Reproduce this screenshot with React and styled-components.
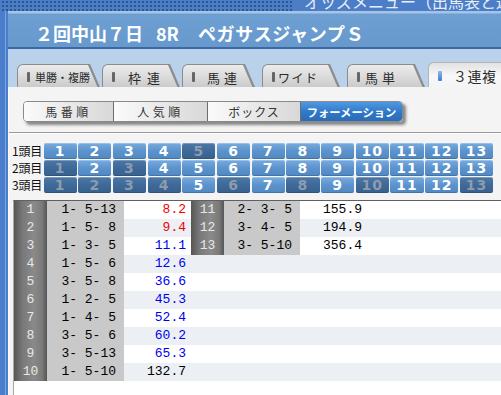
import React from "react";
import styled, { createGlobalStyle } from "styled-components";

const GlobalStyle = createGlobalStyle`
  html, body {
    margin: 0;
    padding: 0;
    background: #fff;
  }
  body {
    width: 501px;
    height: 395px;
    overflow: hidden;
    font-family: "Noto Sans CJK JP", "Noto Sans", sans-serif;
  }
`;

const tabs = [
  { label: "単勝・複勝", w: 83, gap: 0, indent: 5, size: 11, spacing: 0 },
  { label: "枠連", w: 78, gap: 2, indent: 13, size: 13, spacing: 6 },
  { label: "馬連", w: 73, gap: 2, indent: 12, size: 13, spacing: 4 },
  { label: "ワイド", w: 78, gap: 7, indent: 3, size: 12, spacing: 1.5 },
  { label: "馬単", w: 78, gap: 7, indent: 5, size: 13, spacing: 4 },
  { label: "３連複", w: 85, gap: 3, indent: 11, size: 14, spacing: 0.5, active: true },
];

const sorts = [
  { label: "馬番順", w: 89, spacing: 3.5 },
  { label: "人気順", w: 93, spacing: 3.5 },
  { label: "ボックス", w: 92, spacing: 1 },
  { label: "フォーメーション", w: 101, spacing: 0, active: true },
];

const picks = [
  [1, 2, 3, 4, 6, 7, 8, 9, 10, 11, 12, 13],
  [2, 4, 5, 6, 7, 8, 9, 10, 11, 12, 13],
  [5, 7, 9, 11, 12],
];

const odds = [
  ["1", "1- 5-13", "8.2", "red"],
  ["2", "1- 5- 8", "9.4", "red"],
  ["3", "1- 3- 5", "11.1", "blue"],
  ["4", "1- 5- 6", "12.6", "blue"],
  ["5", "3- 5- 8", "36.6", "blue"],
  ["6", "1- 2- 5", "45.3", "blue"],
  ["7", "1- 4- 5", "52.4", "blue"],
  ["8", "3- 5- 6", "60.2", "blue"],
  ["9", "3- 5-13", "65.3", "blue"],
  ["10", "1- 5-10", "132.7", "black"],
  ["11", "2- 3- 5", "155.9", "black"],
  ["12", "3- 4- 5", "194.9", "black"],
  ["13", "3- 5-10", "356.4", "black"],
];

const oddsColors = { red: "#f00000", blue: "#0000f0", black: "#000" };

const App = () => {
  return (
    <Page>
      <GlobalStyle />
      <TopBar>
        <Dots />
        <MenuTitle>オッズメニュー（出馬表と連動）</MenuTitle>
      </TopBar>
      <Body>
        <Strip />
        <Main>
          <HeaderBar>
            <RaceTitle>
              <TitlePart>２回中山７日</TitlePart>
              <TitlePart $gap={13}>8R</TitlePart>
              <TitlePart $gap={19} $spacing={0.7}>
                ペガサスジャンプＳ
              </TitlePart>
            </RaceTitle>
          </HeaderBar>
          <TabRow>
            {tabs.map((t) => (
              <TabShape key={t.label} $w={t.w} $gap={t.gap} $active={t.active}>
                <TabFace $active={t.active}>
                  <TabMark $active={t.active} />
                  <TabLabel $indent={t.indent} $size={t.size} $spacing={t.spacing}>
                    {t.label}
                  </TabLabel>
                </TabFace>
              </TabShape>
            ))}
          </TabRow>
          <Content>
            <SortGroup>
              {sorts.map((s) => (
                <SortButton key={s.label} $w={s.w} $active={s.active} $spacing={s.spacing}>
                  {s.label}
                </SortButton>
              ))}
            </SortGroup>
            <Rule />
            <PickGrid>
              {picks.map((row, i) => (
                <PickRow key={i}>
                  <PickLabel>{i + 1}頭目</PickLabel>
                  {Array.from({ length: 13 }, (_, n) => (
                    <PickCell key={n} $on={row.includes(n + 1)}>
                      {n + 1}
                    </PickCell>
                  ))}
                </PickRow>
              ))}
            </PickGrid>
            <TableWrap>
              {odds.slice(0, 10).map((left, i) => {
                const right = odds[i + 10];
                return (
                  <TableRow key={left[0]} $alt={i % 2 === 1}>
                    <NumCell $w={33}>{left[0]}</NumCell>
                    <ComboCell $w={77}>{left[1]}</ComboCell>
                    <OddsCell $color={oddsColors[left[3]]}>{left[2]}</OddsCell>
                    {right && (
                      <>
                        <NumCell $w={33}>{right[0]}</NumCell>
                        <ComboCell $w={76}>{right[1]}</ComboCell>
                        <OddsCell $color={oddsColors[right[3]]}>{right[2]}</OddsCell>
                      </>
                    )}
                  </TableRow>
                );
              })}
            </TableWrap>
          </Content>
        </Main>
      </Body>
    </Page>
  );
};

const Page = styled.div`
  width: 501px;
  height: 395px;
  display: flex;
  flex-direction: column;
  overflow: hidden;
`;

const TopBar = styled.div`
  flex: none;
  height: 11px;
  display: flex;
  background: #4b7ec6;
  overflow: hidden;
`;

const Dots = styled.div`
  width: 293px;
  flex: none;
  background-image: radial-gradient(circle, #2d5690 0.9px, transparent 1.3px);
  background-size: 4px 4px;
  background-position: 1px 0;
`;

const MenuTitle = styled.div`
  margin-left: 11px;
  margin-top: -7px;
  white-space: nowrap;
  color: #e8eef8;
  font-size: 16px;
  line-height: 16px;
`;

const Body = styled.div`
  flex: 1;
  display: flex;
  min-height: 0;
`;

const Strip = styled.div`
  width: 8px;
  flex: none;
  background: linear-gradient(to right, #4a7ecc 0 5px, #7ea6dc 5px 6px, #4a7ecc 6px);
`;

const Main = styled.div`
  flex: 1;
  display: flex;
  flex-direction: column;
  min-width: 0;
`;

const HeaderBar = styled.div`
  flex: none;
  height: 36px;
  display: flex;
  align-items: center;
  background: linear-gradient(#a6c4e6 0, #a6c4e6 2px, #6d9fd3 3px, #6799cd 100%);
  border-bottom: 2px solid #3c68a4;
`;

const RaceTitle = styled.h1`
  margin: 7px 0 0 27px;
  display: flex;
  color: #fff;
  font-size: 18px;
  font-weight: bold;
  white-space: nowrap;
`;

const TitlePart = styled.span`
  margin-left: ${(p) => p.$gap || 0}px;
  letter-spacing: ${(p) => p.$spacing || 0}px;
`;

const TabRow = styled.div`
  flex: none;
  height: 38px;
  box-sizing: border-box;
  display: flex;
  align-items: flex-end;
  padding-left: 9px;
  background: #b9d1eb;
  overflow: hidden;
`;

const TabShape = styled.div`
  flex: none;
  box-sizing: border-box;
  width: ${(p) => p.$w}px;
  height: ${(p) => (p.$active ? 25 : 23)}px;
  margin-left: ${(p) => p.$gap}px;
  padding: 1px 1px 0 1px;
  background: ${(p) => (p.$active ? "#b4b4b4" : "#8c8c8c")};
  border-radius: 6px 6px 0 0;
  clip-path: polygon(0 0, calc(100% - 10px) 0, 100% 100%, 0 100%);
`;

const TabFace = styled.div`
  height: 100%;
  display: flex;
  align-items: center;
  padding: 2px 0 0 9px;
  box-sizing: border-box;
  border-radius: 5px 5px 0 0;
  clip-path: polygon(0 0, calc(100% - 11px) 0, calc(100% - 1.5px) 100%, 0 100%);
  background: ${(p) =>
    p.$active
      ? "linear-gradient(#e2e2e2, #f8f8f8 55%, #f4f4f4)"
      : "linear-gradient(#ececec, #dcdcdc 50%, #cbcbcb)"};
`;

const TabMark = styled.span`
  flex: none;
  width: ${(p) => (p.$active ? 4 : 3)}px;
  height: 10px;
  border-radius: 1px;
  background: ${(p) => (p.$active ? "linear-gradient(#8ab8ec, #3f7dcc)" : "#666")};
`;

const TabLabel = styled.span`
  margin-left: ${(p) => p.$indent}px;
  font-size: ${(p) => p.$size}px;
  letter-spacing: ${(p) => p.$spacing}px;
  color: #2a2a2a;
  white-space: nowrap;
`;

const Content = styled.div`
  flex: 1;
  display: flex;
  flex-direction: column;
  min-height: 0;
  background: #f4f4f4;
  border-left: 1px solid #fafafa;
`;

const SortGroup = styled.div`
  display: flex;
  align-self: flex-start;
  margin: 14px 0 0 14px;
  height: 19px;
  border: 1px solid #8a8a8a;
  border-radius: 4px;
  overflow: hidden;
  box-shadow: 3px 3px 3px rgba(0, 0, 0, 0.45);
`;

const SortButton = styled.div`
  width: ${(p) => p.$w}px;
  flex: none;
  display: flex;
  align-items: center;
  justify-content: center;
  font-size: ${(p) => (p.$active ? 11.3 : 12)}px;
  font-weight: ${(p) => (p.$active ? "bold" : "normal")};
  letter-spacing: ${(p) => p.$spacing}px;
  color: ${(p) => (p.$active ? "#fff" : "#333")};
  background: ${(p) =>
    p.$active
      ? "linear-gradient(#4f98e2, #2f78c8 55%, #2a6cb8)"
      : "linear-gradient(to right, #fbfbfb, #ececec 40%, #d8d8d8)"};
  & + & {
    border-left: 1px solid #6e6e6e;
  }
`;

const Rule = styled.div`
  margin-top: 10px;
  border-top: 1px solid #9a9a9a;
  border-bottom: 1px solid #fff;
`;

const PickGrid = styled.div`
  margin: 9px 0 0 3px;
  width: 481px;
  display: flex;
  flex-direction: column;
  gap: 2px;
`;

const PickRow = styled.div`
  display: grid;
  grid-template-columns: 30px repeat(13, 1fr);
  column-gap: 1.5px;
  height: 15px;
`;

const PickLabel = styled.div`
  font-size: 12px;
  line-height: 15px;
  letter-spacing: -0.2px;
  color: #111;
  white-space: nowrap;
  overflow: hidden;
`;

const PickCell = styled.div`
  border-radius: 2px;
  display: flex;
  align-items: center;
  justify-content: center;
  font-family: "DejaVu Sans", "Liberation Sans", sans-serif;
  font-weight: bold;
  font-size: 14px;
  letter-spacing: 1px;
  color: ${(p) => (p.$on ? "#fff" : "#8d9cad")};
  background: ${(p) =>
    p.$on
      ? "linear-gradient(#78acdf, #5c93cd 50%, #5088c3)"
      : "linear-gradient(#4c78a8, #3e6998 50%, #37618e)"};
  box-shadow: inset 0 1px rgba(255, 255, 255, 0.25), inset 0 -1px rgba(0, 0, 0, 0.15);
`;

const TableWrap = styled.div`
  flex: 1;
  margin: 8px 0 0 4px;
  background: #fff;
  border-top: 1px solid #606060;
  border-left: 1px solid #a8a8a8;
`;

const TableRow = styled.div`
  display: flex;
  height: 18px;
  line-height: 18px;
  font-family: "Liberation Mono", "DejaVu Sans Mono", monospace;
  font-size: 13px;
  background: ${(p) => (p.$alt ? "#ecf0f4" : "#fff")};
`;

const NumCell = styled.div`
  width: ${(p) => p.$w}px;
  flex: none;
  text-align: center;
  color: #e8e8e8;
  background: linear-gradient(to right, #555 0%, #787878 25%, #8a8a8a 60%, #7a7a7a 85%, #565656 100%);
`;

const ComboCell = styled.div`
  width: ${(p) => p.$w}px;
  flex: none;
  box-sizing: border-box;
  padding-right: 8px;
  text-align: right;
  white-space: pre;
  color: #000;
  background: #c9c9c9;
`;

const OddsCell = styled.div`
  width: 67px;
  flex: none;
  box-sizing: border-box;
  padding-right: 5px;
  text-align: right;
  color: ${(p) => p.$color};
`;

export default App;
